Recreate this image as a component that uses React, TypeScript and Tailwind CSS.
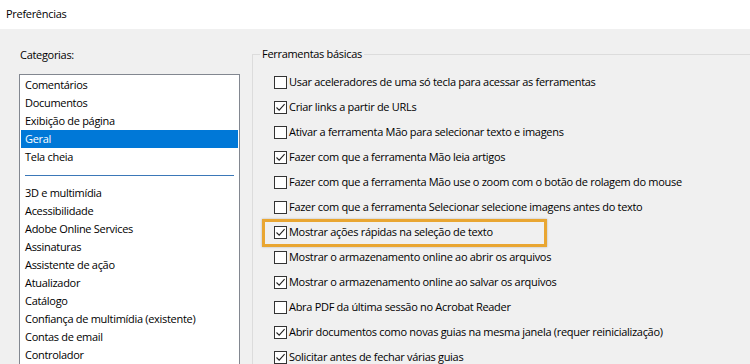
import React from "react";

const FONT = { fontFamily: '"Open Sans", "Noto Sans", sans-serif' };

const categoriesTop = ["Comentários", "Documentos", "Exibição de página", "Geral", "Tela cheia"];
const categoriesBottom = [
  "3D e multimídia",
  "Acessibilidade",
  "Adobe Online Services",
  "Assinaturas",
  "Assistente de ação",
  "Atualizador",
  "Catálogo",
  "Confiança de multimídia (existente)",
  "Contas de email",
  "Controlador",
];

const options: { label: string; checked: boolean; highlight?: boolean }[] = [
  { label: "Usar aceleradores de uma só tecla para acessar as ferramentas", checked: false },
  { label: "Criar links a partir de URLs", checked: true },
  { label: "Ativar a ferramenta Mão para selecionar texto e imagens", checked: false },
  { label: "Fazer com que a ferramenta Mão leia artigos", checked: true },
  { label: "Fazer com que a ferramenta Mão use o zoom com o botão de rolagem do mouse", checked: false },
  { label: "Fazer com que a ferramenta Selecionar selecione imagens antes do texto", checked: false },
  { label: "Mostrar ações rápidas na seleção de texto", checked: true, highlight: true },
  { label: "Mostrar o armazenamento online ao abrir os arquivos", checked: false },
  { label: "Mostrar o armazenamento online ao salvar os arquivos", checked: true },
  { label: "Abra PDF da última sessão no Acrobat Reader", checked: false },
  { label: "Abrir documentos como novas guias na mesma janela (requer reinicialização)", checked: true },
  { label: "Solicitar antes de fechar várias guias", checked: true },
];

function Checkbox({ checked }: { checked: boolean }) {
  return (
    <span className="flex h-[13px] w-[13px] shrink-0 items-center justify-center border border-[#333333] bg-white">
      {checked && (
        <svg width="11" height="11" viewBox="0 0 11 11" fill="none">
          <path d="M1.5 5.5 L4.2 8.2 L9.6 2.2" stroke="#222222" strokeWidth="1.1" />
        </svg>
      )}
    </span>
  );
}

function CategoryItem({ name }: { name: string }) {
  const selected = name === "Geral";
  return (
    <div
      className={
        selected
          ? "h-[18px] bg-[#0078d7] pl-[4px] leading-[18px] text-white"
          : "h-[18px] pl-[4px] leading-[18px] text-black"
      }
    >
      {name}
    </div>
  );
}

export default function App() {
  return (
    <div
      className="h-[364px] w-[750px] overflow-hidden text-[11px] tracking-[-0.3px] text-black"
      style={FONT}
    >
      <div className="flex h-[29px] items-center bg-white pl-[6px]">Preferências</div>

      <div className="flex h-[335px] bg-[#f0f0f0]">
        {/* categorias */}
        <div className="w-[252px] shrink-0 pl-[19px] pt-[17px]">
          <div className="mb-[10px] h-[18px] pl-[1px] leading-[18px]">Categorias:</div>
          <div className="w-[221px] border border-[#828790] bg-white px-[1px] pt-px">
            {categoriesTop.map((c) => (
              <CategoryItem key={c} name={c} />
            ))}
            <div className="flex h-[18px] items-center px-[4px]">
              <div className="h-px w-full bg-[#3b78b8]" />
            </div>
            {categoriesBottom.map((c) => (
              <CategoryItem key={c} name={c} />
            ))}
          </div>
        </div>

        {/* ferramentas básicas */}
        <fieldset className="mt-[16px] flex-1 border-l border-t border-[#dcdcdc] pl-[21px] pt-[7px]">
          <legend className="-ml-[14px] px-[2px] leading-[18px]">Ferramentas básicas</legend>
          <div className="flex flex-col">
            {options.map((o) => (
              <div key={o.label} className="relative flex h-[25px] items-center gap-[2px]">
                {o.highlight && (
                  <span className="absolute left-[-12px] top-[-1px] h-[28px] w-[285px] border-[3px] border-[#e9a632] shadow-[0_0_2px_rgba(0,0,0,0.25)]" />
                )}
                <Checkbox checked={o.checked} />
                <span className="whitespace-nowrap">{o.label}</span>
              </div>
            ))}
          </div>
        </fieldset>
      </div>
    </div>
  );
}
